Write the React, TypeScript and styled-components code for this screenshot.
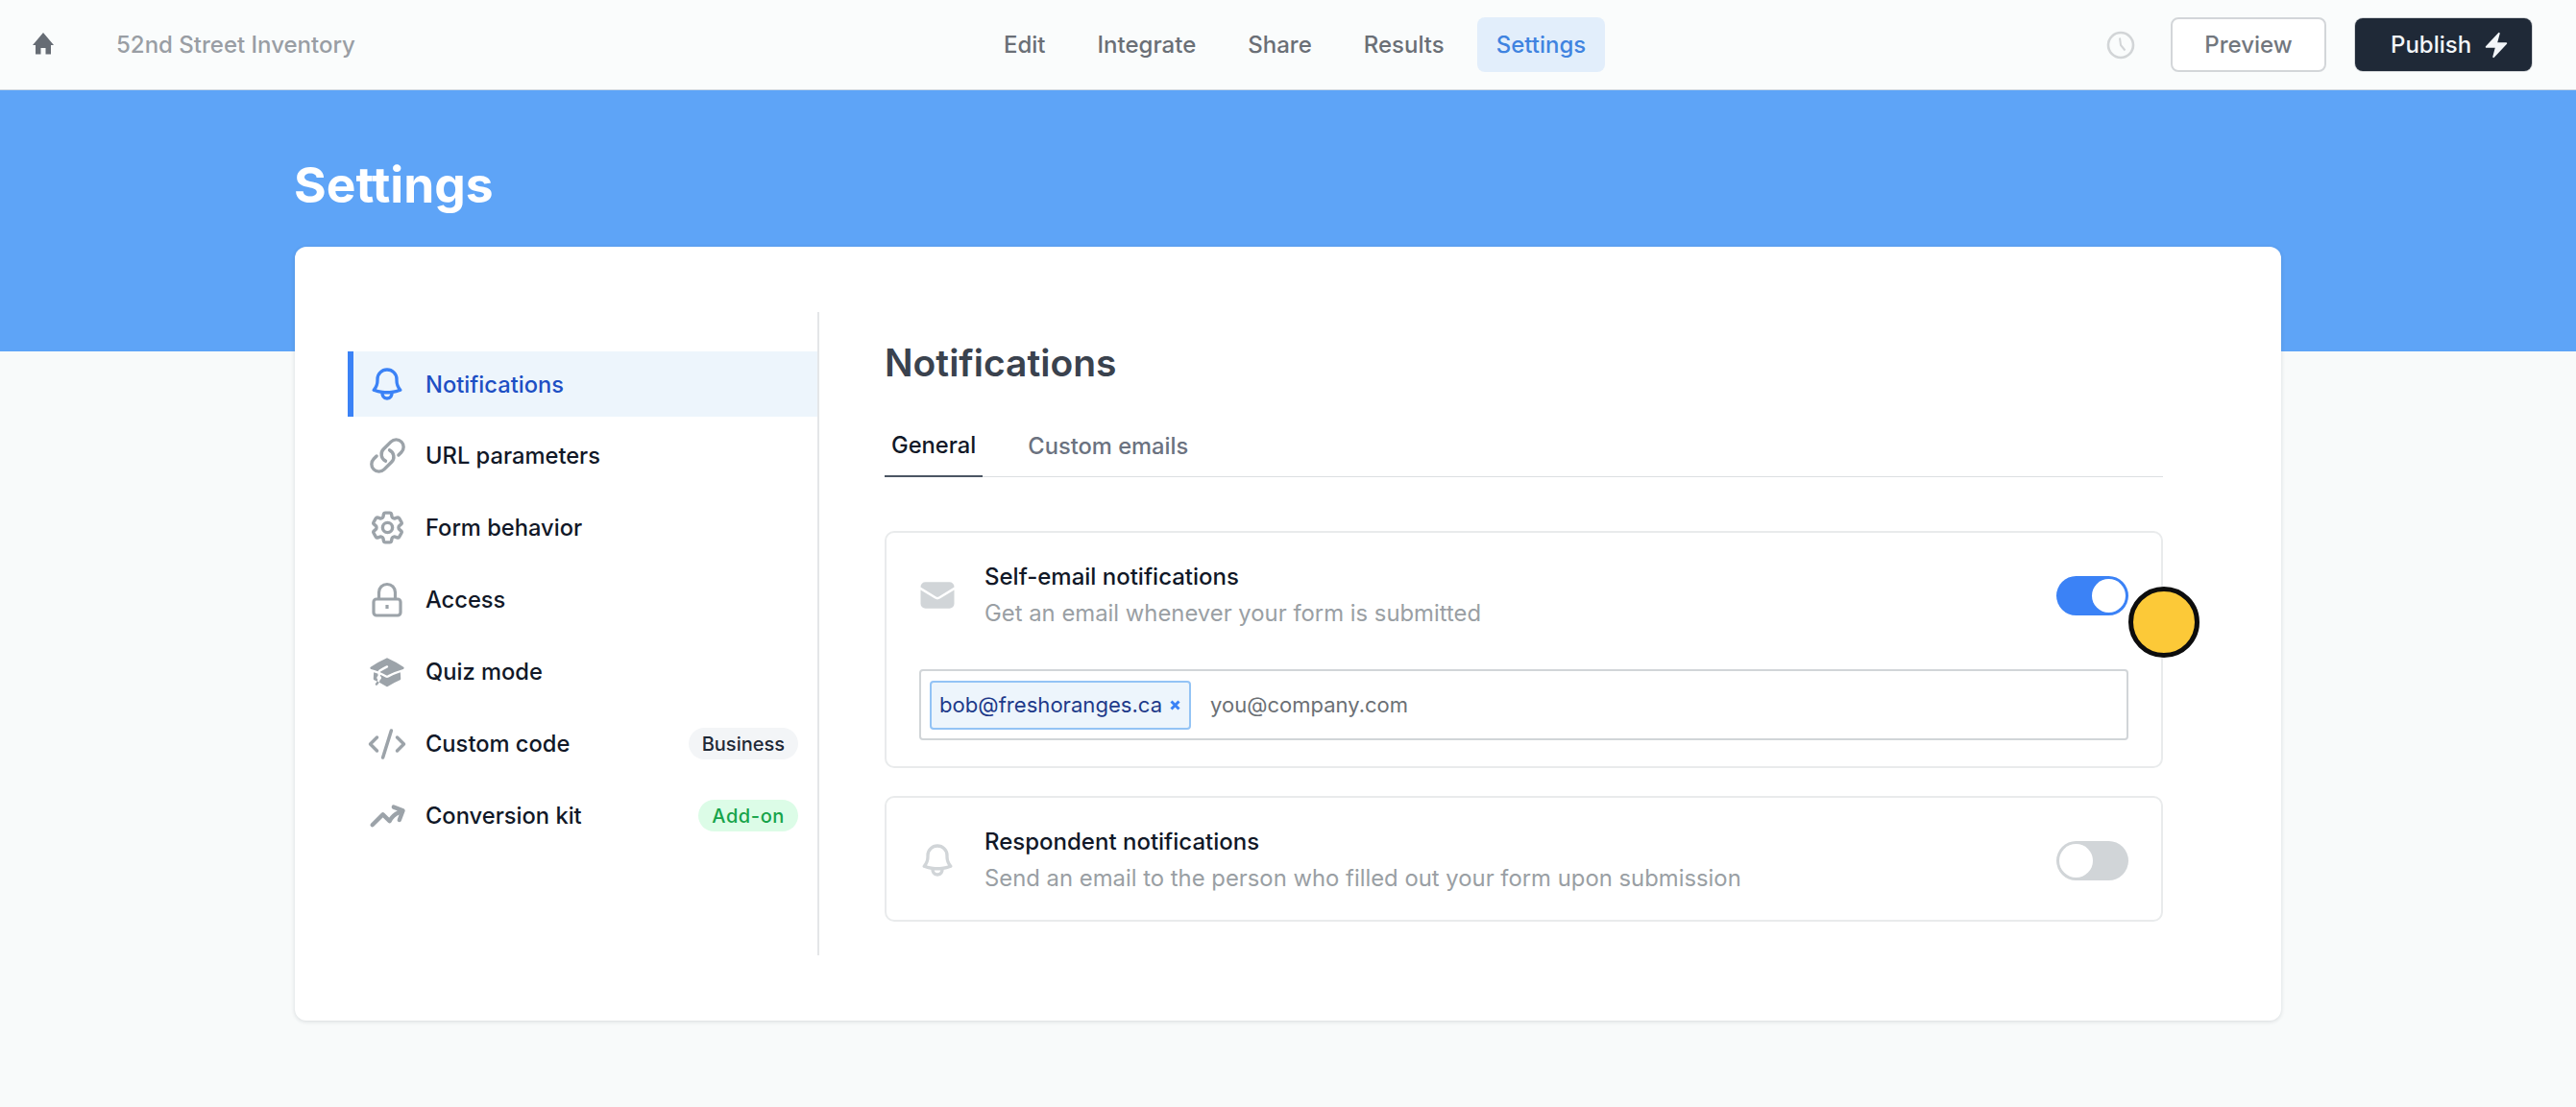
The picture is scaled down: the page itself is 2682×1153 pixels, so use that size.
import { ReactNode } from "react";
import styled, { createGlobalStyle } from "styled-components";
import {
  HiAcademicCap,
  HiArrowTrendingUp,
  HiBolt,
  HiEnvelope,
  HiOutlineBell,
  HiOutlineCog6Tooth,
  HiOutlineLink,
} from "react-icons/hi2";
import { CodeXml } from "lucide-react";

const GlobalStyle = createGlobalStyle`
  html, body {
    margin: 0;
    padding: 0;
    background: #f8fafa;
    font-family: Inter, "Liberation Sans", sans-serif;
    color: #111827;
  }
  * { box-sizing: border-box; }
`;

const Page = styled.div`
  width: 2682px;
  height: 1153px;
  overflow: hidden;
  position: relative;
`;

const Header = styled.header`
  height: 94px;
  display: flex;
  align-items: center;
  padding: 0 46px 0 34px;
  background: #fafcfc;
  border-bottom: 1px solid #cfd8e0;
`;

const HeaderLeft = styled.div`
  flex: 0 0 991px;
  display: flex;
  align-items: center;
  gap: 65px;
  svg { width: 22px; height: 23px; color: #666c74; margin-top: -2px; }
`;

const FormName = styled.span`
  font-size: 24px;
  font-weight: 500;
  color: #999ea4;
`;

const Nav = styled.nav`
  display: flex;
  gap: 14px;
`;

const NavItem = styled.a<{ $active?: boolean }>`
  height: 57px;
  padding: 0 20px;
  display: flex;
  align-items: center;
  border-radius: 8px;
  font-size: 24px;
  font-weight: 500;
  color: ${({ $active }) => ($active ? "#3f83e0" : "#6a6f76")};
  background: ${({ $active }) => ($active ? "#e2eefb" : "transparent")};
`;

const HeaderRight = styled.div`
  margin-left: auto;
  display: flex;
  align-items: center;
  svg.clock { width: 30px; height: 30px; color: #d2d5d7; margin-right: 37px; }
`;

const PreviewButton = styled.button`
  width: 162px;
  height: 57px;
  margin-right: 30px;
  background: #fff;
  border: 2px solid #d3d6d9;
  border-radius: 8px;
  font: 500 24px Inter, sans-serif;
  color: #72777e;
`;

const PublishButton = styled.button`
  width: 184px;
  height: 55px;
  padding: 0 0 0 37px;
  display: flex;
  align-items: center;
  gap: 11px;
  background: #1f2937;
  border: 0;
  border-radius: 8px;
  box-shadow: 0 0 0 1px #d3d6d9;
  font: 500 24px Inter, sans-serif;
  color: #f3f6f9;
  svg { width: 30px; height: 30px; }
`;

const Hero = styled.section`
  height: 272px;
  padding: 67px 0 0 306px;
  background: #5ea4f7;
`;

const PageTitle = styled.h1`
  margin: 0;
  font-size: 51.5px;
  line-height: 62px;
  font-weight: 700;
  color: #fff;
`;

const Panel = styled.main`
  position: relative;
  margin: -109px 0 0 307px;
  width: 2068px;
  height: 806px;
  display: flex;
  padding: 68px 123px 68px 55px;
  background: #fff;
  border-radius: 12px;
  box-shadow: 0 1px 4px rgba(40, 50, 60, 0.16);
`;

const Sidebar = styled.aside`
  width: 491px;
  flex: none;
  padding-top: 41px;
  border-right: 2px solid #e4e6e8;
`;

const SideItem = styled.a<{ $active?: boolean }>`
  height: ${({ $active }) => ($active ? "68px" : "75px")};
  margin-bottom: ${({ $active }) => ($active ? "3px" : "0")};
  display: flex;
  align-items: center;
  padding-left: ${({ $active }) => ($active ? "16px" : "22px")};
  border-left: ${({ $active }) => ($active ? "6px solid #3b82f6" : "0")};
  background: ${({ $active }) => ($active ? "#edf5fc" : "transparent")};
  font-size: 23.7px;
  font-weight: 500;
  color: ${({ $active }) => ($active ? "#1d4fc4" : "#111827")};
`;

const SideIcon = styled.span<{ $active?: boolean; $size: number; $stroke: number }>`
  width: 38px;
  height: 38px;
  flex: none;
  margin-right: 21px;
  display: flex;
  align-items: center;
  justify-content: center;
  color: ${({ $active }) => ($active ? "#3b82f6" : "#9ca3a9")};
  svg {
    width: ${({ $size }) => $size}px;
    height: ${({ $size }) => $size}px;
    flex: none;
    stroke-width: ${({ $stroke }) => $stroke};
  }
`;

const Badge = styled.span<{ $green?: boolean }>`
  margin-left: auto;
  margin-right: 20px;
  height: 33px;
  padding: 0 14px;
  display: flex;
  align-items: center;
  border-radius: 17px;
  font-size: 20px;
  font-weight: 500;
  letter-spacing: ${({ $green }) => ($green ? "0.6px" : "0")};
  color: ${({ $green }) => ($green ? "#16a34a" : "#1f2937")};
  background: ${({ $green }) => ($green ? "#dcfce7" : "#f3f5f7")};
`;

const Content = styled.section`
  flex: 1;
  margin-left: 68px;
`;

const Heading = styled.h2`
  margin: 28px 0 0;
  font-size: 39px;
  line-height: 50px;
  font-weight: 600;
  color: #3a424e;
`;

const Tabs = styled.div`
  height: 65px;
  margin-top: 29px;
  display: flex;
  gap: 27px;
  border-bottom: 1px solid #dcdfe2;
`;

const Tab = styled.a<{ $active?: boolean }>`
  height: 65px;
  padding: 0 7px;
  margin-left: ${({ $active }) => ($active ? "0" : "13px")};
  display: flex;
  align-items: center;
  font-size: 23.7px;
  font-weight: 500;
  color: ${({ $active }) => ($active ? "#111827" : "#6b7280")};
  border-bottom: ${({ $active }) => ($active ? "2px solid #4b5563" : "0")};
`;

const CardList = styled.div`
  margin-top: 56px;
  display: flex;
  flex-direction: column;
  gap: 29px;
`;

const Card = styled.div`
  padding: 28px 34px 25px 34px;
  border: 2px solid #e9ebec;
  border-radius: 10px;
`;

const CardRow = styled.div`
  display: flex;
  align-items: center;
`;

const CardIcon = styled.span<{ $stroke: number }>`
  width: 40px;
  height: 40px;
  flex: none;
  margin: 0 29px 0 -1px;
  display: flex;
  align-items: center;
  justify-content: center;
  color: #d1d5d8;
  svg { width: 40px; height: 40px; stroke-width: ${({ $stroke }) => $stroke}; }
`;

const CardText = styled.div`
  flex: 1;
`;

const CardTitle = styled.div`
  font-size: 24px;
  line-height: 36px;
  font-weight: 500;
  color: #111827;
`;

const CardSub = styled.div`
  margin-top: 2px;
  font-size: 23.85px;
  line-height: 36px;
  color: #9a9fa4;
`;

const Toggle = styled.span<{ $on?: boolean }>`
  width: 75px;
  height: 41px;
  flex: none;
  padding: 3px;
  display: flex;
  justify-content: ${({ $on }) => ($on ? "flex-end" : "flex-start")};
  border-radius: 21px;
  background: ${({ $on }) => ($on ? "#3b82f6" : "#d1d5d8")};
  &::after {
    content: "";
    width: 35px;
    height: 35px;
    border-radius: 50%;
    background: #fff;
  }
`;

const EmailInput = styled.div`
  height: 74px;
  margin: 40px 0 2px;
  display: flex;
  align-items: center;
  gap: 20px;
  padding: 0 9px;
  border: 2px solid #d1d5d8;
  border-radius: 4px;
`;

const Chip = styled.span`
  height: 51px;
  padding: 0 9px 0 8px;
  display: flex;
  align-items: center;
  gap: 8px;
  background: #edf5fc;
  border: 2px solid #93c3f5;
  border-radius: 4px;
  font-size: 22.1px;
  color: #1e3a8a;
  svg { width: 11px; height: 11px; color: #3b82f6; }
`;

const Placeholder = styled.span`
  font-size: 22px;
  color: #6b7075;
`;

const Marker = styled.span`
  position: absolute;
  left: 2216px;
  top: 611px;
  width: 74px;
  height: 74px;
  border-radius: 50%;
  background: #fcc938;
  border: 5px solid #0d0d0d;
`;

function HomeIcon() {
  return (
    <svg viewBox="0 0 22 23" fill="currentColor">
      <path d="M11 0 L22 13 H19 V22.5 H13.5 V16 H8.5 V22.5 H3 V13 H0 Z" />
    </svg>
  );
}

function ClockIcon() {
  return (
    <svg className="clock" viewBox="0 0 30 30" fill="none" stroke="currentColor" strokeWidth="2.6">
      <circle cx="15" cy="15" r="13" />
      <path d="M14 7.5 L15 15 L19.5 20.5" strokeWidth="2" />
    </svg>
  );
}

function LockIcon() {
  return (
    <svg viewBox="0 0 38 38" fill="none" stroke="currentColor">
      <path d="M10.5 18v-7a8.5 8.5 0 0 1 17 0v7" />
      <rect x="5" y="18" width="28" height="17" rx="3" />
      <path d="M19 24v4" />
    </svg>
  );
}

function CloseIcon() {
  return (
    <svg viewBox="0 0 11 11" fill="none" stroke="currentColor" strokeWidth="3" style={{ flex: "none" }}>
      <path d="M1.5 1.5 L9.5 9.5 M9.5 1.5 L1.5 9.5" />
    </svg>
  );
}

type SideEntry = {
  label: string;
  icon: ReactNode;
  size: number;
  stroke: number;
  active?: boolean;
  badge?: string;
  green?: boolean;
};

const sideItems: SideEntry[] = [
  { label: "Notifications", icon: <HiOutlineBell />, size: 40, stroke: 2, active: true },
  { label: "URL parameters", icon: <HiOutlineLink />, size: 41, stroke: 2 },
  { label: "Form behavior", icon: <HiOutlineCog6Tooth />, size: 41, stroke: 2 },
  { label: "Access", icon: <LockIcon />, size: 38, stroke: 3.2 },
  { label: "Quiz mode", icon: <HiAcademicCap />, size: 38, stroke: 0 },
  { label: "Custom code", icon: <CodeXml />, size: 42, stroke: 2, badge: "Business" },
  { label: "Conversion kit", icon: <HiArrowTrendingUp />, size: 39, stroke: 1.2, badge: "Add-on", green: true },
];

const navItems = ["Edit", "Integrate", "Share", "Results", "Settings"];

export default function App() {
  return (
    <Page>
      <GlobalStyle />
      <Header>
        <HeaderLeft>
          <HomeIcon />
          <FormName>52nd Street Inventory</FormName>
        </HeaderLeft>
        <Nav>
          {navItems.map((item) => (
            <NavItem key={item} $active={item === "Settings"}>
              {item}
            </NavItem>
          ))}
        </Nav>
        <HeaderRight>
          <ClockIcon />
          <PreviewButton>Preview</PreviewButton>
          <PublishButton>
            Publish <HiBolt />
          </PublishButton>
        </HeaderRight>
      </Header>
      <Hero>
        <PageTitle>Settings</PageTitle>
      </Hero>
      <Panel>
        <Sidebar>
          {sideItems.map((item) => (
            <SideItem key={item.label} $active={item.active}>
              <SideIcon $active={item.active} $size={item.size} $stroke={item.stroke}>
                {item.icon}
              </SideIcon>
              {item.label}
              {item.badge && <Badge $green={item.green}>{item.badge}</Badge>}
            </SideItem>
          ))}
        </Sidebar>
        <Content>
          <Heading>Notifications</Heading>
          <Tabs>
            <Tab $active>General</Tab>
            <Tab>Custom emails</Tab>
          </Tabs>
          <CardList>
            <Card>
              <CardRow>
                <CardIcon $stroke={0}>
                  <HiEnvelope />
                </CardIcon>
                <CardText>
                  <CardTitle>Self-email notifications</CardTitle>
                  <CardSub>Get an email whenever your form is submitted</CardSub>
                </CardText>
                <Toggle $on />
              </CardRow>
              <EmailInput>
                <Chip>
                  bob@freshoranges.ca <CloseIcon />
                </Chip>
                <Placeholder>you@company.com</Placeholder>
              </EmailInput>
            </Card>
            <Card>
              <CardRow>
                <CardIcon $stroke={2}>
                  <HiOutlineBell />
                </CardIcon>
                <CardText>
                  <CardTitle>Respondent notifications</CardTitle>
                  <CardSub>Send an email to the person who filled out your form upon submission</CardSub>
                </CardText>
                <Toggle />
              </CardRow>
            </Card>
          </CardList>
        </Content>
      </Panel>
      <Marker />
    </Page>
  );
}
